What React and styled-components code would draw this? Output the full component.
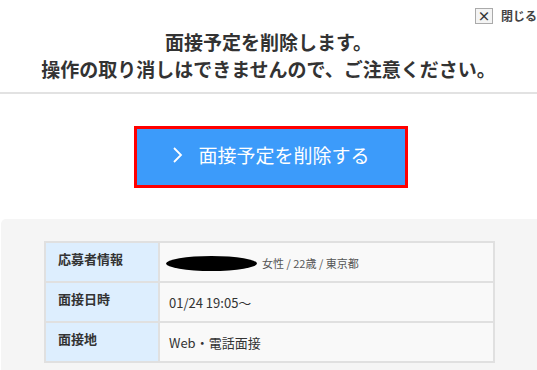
import React from 'react'
import styled, { createGlobalStyle } from 'styled-components'

const GlobalStyle = createGlobalStyle`
  html, body {
    margin: 0;
    padding: 0;
    background: #fff;
  }
  body {
    font-family: "Noto Sans CJK JP", "Noto Sans", sans-serif;
    color: #333;
  }
`

const rows = [
  { label: '応募者情報', applicant: true },
  { label: '面接日時', value: '01/24 19:05～' },
  { label: '面接地', value: 'Web・電話面接' },
]

function App() {
  return (
    <Page>
      <GlobalStyle />
      <Header>
        <CloseButton>
          <CloseBox>×</CloseBox>
          <span>閉じる</span>
        </CloseButton>
        <Title>
          面接予定を削除します。
          <br />
          操作の取り消しはできませんので、ご注意ください。
        </Title>
      </Header>
      <Actions>
        <DeleteButton>
          <Chevron viewBox="0 0 12 18">
            <path d="M2 2 L9 9 L2 16" fill="none" stroke="#fff" strokeWidth="1.8" />
          </Chevron>
          面接予定を削除する
        </DeleteButton>
      </Actions>
      <Panel>
        <InfoTable>
          <tbody>
            {rows.map((row) => (
              <tr key={row.label}>
                <Label>{row.label}</Label>
                <Value>
                  {row.applicant ? (
                    <Applicant>
                      <Redacted />
                      <Meta>女性 / 22歳 / 東京都</Meta>
                    </Applicant>
                  ) : (
                    row.value
                  )}
                </Value>
              </tr>
            ))}
          </tbody>
        </InfoTable>
      </Panel>
    </Page>
  )
}

export default App

const Page = styled.div`
  width: 537px;
  height: 370px;
  overflow: hidden;
`

const Header = styled.div`
  position: relative;
  padding: 28px 0 10px;
  border-bottom: 2px solid #e2e2e2;
`

const CloseButton = styled.div`
  position: absolute;
  top: 7px;
  left: 475px;
  display: flex;
  align-items: center;
  gap: 8px;
  font-size: 12px;
  font-weight: bold;
  color: #444;
  white-space: nowrap;
`

const CloseBox = styled.span`
  width: 16px;
  height: 14px;
  border: 1px solid #aaa;
  background: #f4f4f4;
  display: flex;
  align-items: center;
  justify-content: center;
  font-size: 13px;
  line-height: 1;
  color: #333;
`

const Title = styled.h1`
  margin: 0;
  text-align: center;
  font-size: 19px;
  line-height: 27px;
  font-weight: bold;
  color: #333;
`

const Actions = styled.div`
  display: flex;
  justify-content: center;
  padding: 32px 0 31px;
`

const DeleteButton = styled.button`
  width: 274px;
  height: 62px;
  box-sizing: border-box;
  margin-left: 5px;
  border: 3px solid #f00;
  background: #3c9bfa;
  color: #fff;
  font-family: inherit;
  font-size: 19px;
  line-height: 24px;
  display: flex;
  align-items: center;
  justify-content: center;
  gap: 14px;
  padding: 0 0 4px;
  cursor: pointer;
`

const Chevron = styled.svg`
  width: 12px;
  height: 18px;
`

const Panel = styled.div`
  margin-left: 1px;
  background: #f5f5f5;
  border-radius: 5px 0 0 0;
  padding: 22px 42px 20px 43px;
`

const InfoTable = styled.table`
  width: 451px;
  border-collapse: collapse;
  border: 2px solid #e0e0e0;
`

const Label = styled.th`
  width: 114px;
  box-sizing: border-box;
  padding: 7px 12px 13px;
  vertical-align: top;
  background: #ddeefe;
  border: 2px solid #e0e0e0;
  text-align: left;
  font-size: 13px;
  line-height: 18px;
  font-weight: bold;
  color: #333;
`

const Value = styled.td`
  padding: 10px 9px 8px;
  vertical-align: middle;
  background: #f9f9f9;
  border: 2px solid #e0e0e0;
  font-size: 13px;
  line-height: 20px;
  color: #333;
`

const Applicant = styled.div`
  display: flex;
  align-items: center;
  gap: 5px;
`

const Redacted = styled.span`
  display: inline-block;
  width: 91px;
  height: 15px;
  border-radius: 50%;
  background: #000;
  margin-left: -3px;
`

const Meta = styled.span`
  font-size: 11px;
  color: #555;
`
